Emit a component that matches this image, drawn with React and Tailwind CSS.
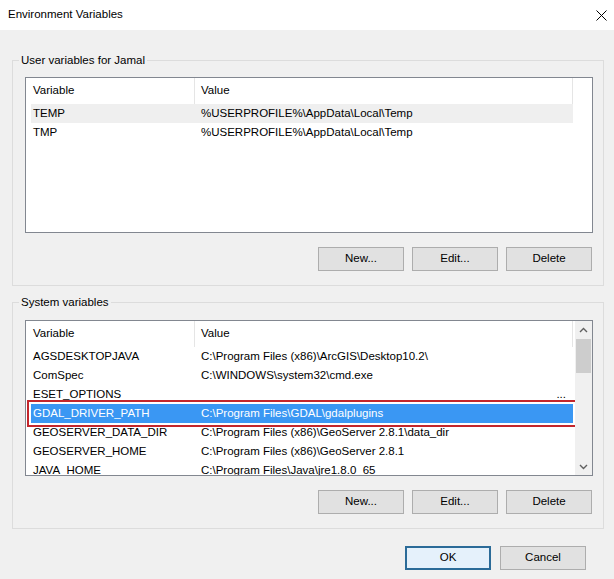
const userVars = [
  { name: 'TEMP', value: '%USERPROFILE%\\AppData\\Local\\Temp', hover: true },
  { name: 'TMP', value: '%USERPROFILE%\\AppData\\Local\\Temp' },
]

const systemVars = [
  { name: 'AGSDESKTOPJAVA', value: 'C:\\Program Files (x86)\\ArcGIS\\Desktop10.2\\' },
  { name: 'ComSpec', value: 'C:\\WINDOWS\\system32\\cmd.exe' },
  { name: 'ESET_OPTIONS', value: '', more: true },
  { name: 'GDAL_DRIVER_PATH', value: 'C:\\Program Files\\GDAL\\gdalplugins', selected: true },
  { name: 'GEOSERVER_DATA_DIR', value: 'C:\\Program Files (x86)\\GeoServer 2.8.1\\data_dir' },
  { name: 'GEOSERVER_HOME', value: 'C:\\Program Files (x86)\\GeoServer 2.8.1' },
  { name: 'JAVA_HOME', value: 'C:\\Program Files\\Java\\jre1.8.0_65' },
]

const Button = ({ children, primary }) => (
  <button
    className={
      primary
        ? 'h-[24px] w-[86px] border-2 border-[#2b6b98] bg-[#e5f1fb] text-black'
        : 'h-[24px] w-[86px] border border-[#adadad] bg-[#e1e1e1] text-black'
    }
  >
    {children}
  </button>
)

const Header = () => (
  <div className="flex h-[26px] shrink-0 items-center">
    <div className="flex h-full w-[164px] items-center border-r border-[#e5e5e5] pl-[2px]">Variable</div>
    <div className="flex h-full flex-1 items-center border-r border-[#e5e5e5] pl-[6px]">Value</div>
  </div>
)

const Row = ({ row }) => (
  <div
    className={[
      'flex h-[19px] shrink-0 items-center whitespace-nowrap',
      row.selected ? 'bg-[#3a97f3] text-white outline-2 outline-offset-2 outline-[#c3262c]' : '',
      row.hover ? 'bg-[#efefef]' : '',
    ].join(' ')}
  >
    <div className="w-[164px] pl-[2px]">{row.name}</div>
    <div className="flex flex-1 pl-[6px]">
      {row.more ? <span className="ml-auto mr-[7px] leading-none">...</span> : row.value}
    </div>
  </div>
)

const Chevron = ({ down }) => (
  <svg width="9" height="6" viewBox="0 0 9 6">
    <polyline
      points={down ? '1,1 4.5,4.5 8,1' : '1,5 4.5,1.5 8,5'}
      fill="none"
      stroke="#606060"
      strokeWidth="1.4"
    />
  </svg>
)

const GroupBox = ({ label, children, className }) => (
  <fieldset className={`border border-[#dcdcdc] ${className}`}>
    <legend className="ml-[6px] px-[2px] leading-[16px]">{label}</legend>
    {children}
  </fieldset>
)

export default function App() {
  return (
    <div
      className="h-[579px] w-[614px] overflow-hidden bg-[#f0f0f0] text-[11.5px] text-black"
      style={{ fontFamily: '"Liberation Sans", Arial, sans-serif' }}
    >
      <div className="flex h-[30px] items-center justify-between bg-white pl-[8px] pr-[7px]">
        <span>Environment Variables</span>
        <svg width="11" height="11" viewBox="0 0 11 11">
          <path d="M0.5 0.5L10.5 10.5M10.5 0.5L0.5 10.5" stroke="#000" strokeWidth="1" />
        </svg>
      </div>

      <div className="pl-[12px] pr-[10px]">
        <GroupBox label="User variables for Jamal" className="mt-[22px]">
          <div className="ml-[12px] mr-[10px] mt-[9px] flex h-[156px] flex-col border border-[#828790] bg-white pl-[5px] pr-[19px]">
            <Header />
            {userVars.map((row) => (
              <Row key={row.name} row={row} />
            ))}
          </div>
          <div className="mr-[11px] mt-[14px] flex justify-end gap-[8px] pb-[14px]">
            <Button>New...</Button>
            <Button>Edit...</Button>
            <Button>Delete</Button>
          </div>
        </GroupBox>

        <GroupBox label="System variables" className="mt-[8px]">
          <div className="ml-[12px] mr-[10px] mt-[10px] flex h-[156px] border border-[#828790] bg-white">
            <div className="flex flex-1 flex-col overflow-hidden pl-[5px] pr-[2px]">
              <Header />
              {systemVars.map((row) => (
                <Row key={row.name} row={row} />
              ))}
            </div>
            <div className="flex w-[17px] flex-col bg-[#f0f0f0]">
              <div className="flex h-[17px] items-center justify-center">
                <Chevron />
              </div>
              <div className="mx-[1px] mt-[1px] h-[34px] bg-[#cdcdcd]" />
              <div className="mt-auto flex h-[17px] items-center justify-center">
                <Chevron down />
              </div>
            </div>
          </div>
          <div className="mr-[11px] mt-[14px] flex justify-end gap-[8px] pb-[14px]">
            <Button>New...</Button>
            <Button>Edit...</Button>
            <Button>Delete</Button>
          </div>
        </GroupBox>

        <div className="mt-[17px] flex justify-end gap-[9px] pr-[18px]">
          <Button primary>OK</Button>
          <Button>Cancel</Button>
        </div>
      </div>
    </div>
  )
}
